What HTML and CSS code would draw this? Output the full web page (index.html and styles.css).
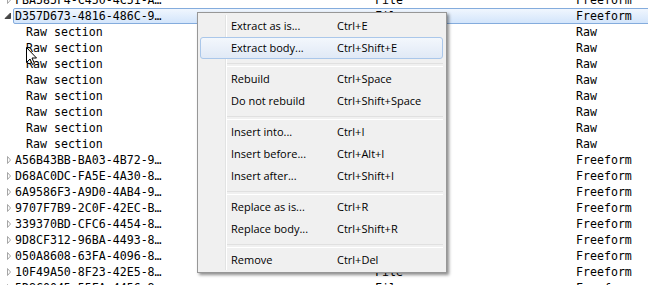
FILE: index.html
```html
<!DOCTYPE html>
<html lang="en">
<head>
  <meta charset="UTF-8" />
  <title>Sections</title>
  <link rel="stylesheet" href="styles.css">
</head>
<body>
  <!-- ===== TREE ===== -->
  <div class="tree">
    <div class="row">
      <span class="exp"><svg width="13" height="16"><path d="M7.5 4.5 L10.5 8 L7.5 11.5 Z" class="tri-closed"/></svg></span>
      <div class="cells"><span class="name">FBA585F4-C450-4C51-A…</span><span>File</span><span>Freeform</span></div>
    </div>
    <div class="row selected">
      <span class="exp"><svg width="13" height="16"><path d="M10.5 5 L10.5 10.5 L5 10.5 Z" class="tri-open"/></svg></span>
      <div class="cells"><span class="name">D357D673-4816-486C-9…</span><span>File</span><span>Freeform</span></div>
    </div>
    <div class="row child"><span class="exp"></span><div class="cells"><span class="name">Raw section</span><span></span><span>Raw</span></div></div>
    <div class="row child"><span class="exp"></span><div class="cells"><span class="name">Raw section</span><span></span><span>Raw</span></div></div>
    <div class="row child"><span class="exp"></span><div class="cells"><span class="name">Raw section</span><span></span><span>Raw</span></div></div>
    <div class="row child"><span class="exp"></span><div class="cells"><span class="name">Raw section</span><span></span><span>Raw</span></div></div>
    <div class="row child"><span class="exp"></span><div class="cells"><span class="name">Raw section</span><span></span><span>Raw</span></div></div>
    <div class="row child"><span class="exp"></span><div class="cells"><span class="name">Raw section</span><span></span><span>Raw</span></div></div>
    <div class="row child"><span class="exp"></span><div class="cells"><span class="name">Raw section</span><span></span><span>Raw</span></div></div>
    <div class="row child"><span class="exp"></span><div class="cells"><span class="name">Raw section</span><span></span><span>Raw</span></div></div>
    <div class="row">
      <span class="exp"><svg width="13" height="16"><path d="M7.5 4.5 L10.5 8 L7.5 11.5 Z" class="tri-closed"/></svg></span>
      <div class="cells"><span class="name">A56B43BB-BA03-4B72-9…</span><span>File</span><span>Freeform</span></div>
    </div>
    <div class="row">
      <span class="exp"><svg width="13" height="16"><path d="M7.5 4.5 L10.5 8 L7.5 11.5 Z" class="tri-closed"/></svg></span>
      <div class="cells"><span class="name">D68AC0DC-FA5E-4A30-8…</span><span>File</span><span>Freeform</span></div>
    </div>
    <div class="row">
      <span class="exp"><svg width="13" height="16"><path d="M7.5 4.5 L10.5 8 L7.5 11.5 Z" class="tri-closed"/></svg></span>
      <div class="cells"><span class="name">6A9586F3-A9D0-4AB4-9…</span><span>File</span><span>Freeform</span></div>
    </div>
    <div class="row">
      <span class="exp"><svg width="13" height="16"><path d="M7.5 4.5 L10.5 8 L7.5 11.5 Z" class="tri-closed"/></svg></span>
      <div class="cells"><span class="name">9707F7B9-2C0F-42EC-B…</span><span>File</span><span>Freeform</span></div>
    </div>
    <div class="row">
      <span class="exp"><svg width="13" height="16"><path d="M7.5 4.5 L10.5 8 L7.5 11.5 Z" class="tri-closed"/></svg></span>
      <div class="cells"><span class="name">339370BD-CFC6-4454-8…</span><span>File</span><span>Freeform</span></div>
    </div>
    <div class="row">
      <span class="exp"><svg width="13" height="16"><path d="M7.5 4.5 L10.5 8 L7.5 11.5 Z" class="tri-closed"/></svg></span>
      <div class="cells"><span class="name">9D8CF312-96BA-4493-8…</span><span>File</span><span>Freeform</span></div>
    </div>
    <div class="row">
      <span class="exp"><svg width="13" height="16"><path d="M7.5 4.5 L10.5 8 L7.5 11.5 Z" class="tri-closed"/></svg></span>
      <div class="cells"><span class="name">050A8608-63FA-4096-8…</span><span>File</span><span>Freeform</span></div>
    </div>
    <div class="row">
      <span class="exp"><svg width="13" height="16"><path d="M7.5 4.5 L10.5 8 L7.5 11.5 Z" class="tri-closed"/></svg></span>
      <div class="cells"><span class="name">10F49A50-8F23-42E5-8…</span><span>File</span><span>Freeform</span></div>
    </div>
    <div class="row">
      <span class="exp"><svg width="13" height="16"><path d="M7.5 4.5 L10.5 8 L7.5 11.5 Z" class="tri-closed"/></svg></span>
      <div class="cells"><span class="name">5D8C0045-55FA-4456-8…</span><span>File</span><span>Freeform</span></div>
    </div>
  </div>

  <!-- ===== CONTEXT MENU ===== -->
  <div class="menu">
    <div class="item"><span>Extract as is...</span><span>Ctrl+E</span></div>
    <div class="item hot"><span>Extract body...</span><span>Ctrl+Shift+E</span></div>
    <div class="sep"></div>
    <div class="item"><span>Rebuild</span><span>Ctrl+Space</span></div>
    <div class="item"><span>Do not rebuild</span><span>Ctrl+Shift+Space</span></div>
    <div class="sep"></div>
    <div class="item"><span>Insert into...</span><span>Ctrl+I</span></div>
    <div class="item"><span>Insert before...</span><span>Ctrl+Alt+I</span></div>
    <div class="item"><span>Insert after...</span><span>Ctrl+Shift+I</span></div>
    <div class="sep"></div>
    <div class="item"><span>Replace as is...</span><span>Ctrl+R</span></div>
    <div class="item"><span>Replace body...</span><span>Ctrl+Shift+R</span></div>
    <div class="sep"></div>
    <div class="item"><span>Remove</span><span>Ctrl+Del</span></div>
  </div>

  <!-- mouse pointer -->
  <svg class="cursor" width="13" height="20" viewBox="0 0 13 20">
    <path d="M0.5 0.5 L0.5 15.5 L4 12 L6.5 17.5 L8.5 16.5 L6 11 L10.5 11 Z" fill="#fff" stroke="#000" stroke-width="1" stroke-linejoin="miter"/>
  </svg>
</body>
</html>
```

FILE: styles.css
```css
* { box-sizing: border-box; margin: 0; padding: 0; }

body {
  width: 648px;
  height: 285px;
  overflow: hidden;
  position: relative;
  background: #ffffff;
  color: #000000;
}

/* ===== TREE ===== */
.tree {
  margin-top: -8px;
  font-family: "DejaVu Sans Mono", "Liberation Mono", monospace;
  font-size: 11.6px;
}
.row {
  display: flex;
  height: 16px;
}
.exp { width: 13px; flex: none; height: 16px; }
.exp svg { display: block; }
.tri-closed { fill: #ffffff; stroke: #a6a6a6; stroke-width: 1; }
.tri-open { fill: #464646; stroke: #464646; stroke-width: 1; stroke-linejoin: round; }

.cells {
  flex: 1;
  display: grid;
  grid-template-columns: 360px 201px 1fr;
  padding-left: 1px;
  border: 1px solid transparent;
  line-height: 14px;
  white-space: nowrap;
  margin-right: -4px;
}
.child .name { padding-left: 11px; }

.row.selected .cells {
  border-color: #84acdd;
  border-radius: 2px;
  background: linear-gradient(#f0f6fe, #d3e5fb);
}

/* ===== MENU ===== */
.menu {
  position: absolute;
  left: 197px;
  top: 12px;
  width: 250px;
  border: 1px solid #979797;
  background: #f0f0f0;
  padding: 2px 3px 1px 2px;
  box-shadow: 2px 2px 3px rgba(0, 0, 0, 0.45);
  font-family: "Open Sans", "Liberation Sans", sans-serif;
  font-size: 11px;
}
.menu::before {
  content: "";
  position: absolute;
  left: 27px;
  top: 2px;
  bottom: 2px;
  width: 1px;
  background: #e2e3e3;
  box-shadow: 1px 0 0 #ffffff;
}
.item {
  position: relative;
  display: grid;
  grid-template-columns: 106px 1fr;
  height: 22px;
  line-height: 20px;
  padding-left: 30px;
  border: 1px solid transparent;
  border-radius: 3px;
}
.item.hot {
  border-color: #aac7ea;
  background: linear-gradient(#f3f7fc, #e0e9f6);
}
.sep {
  position: relative;
  height: 9px;
  margin-left: 27px;
}
.sep::after {
  content: "";
  position: absolute;
  left: 0;
  right: 0;
  top: 4px;
  height: 2px;
  border-top: 1px solid #e0e0e0;
  border-bottom: 1px solid #ffffff;
}

/* ===== POINTER ===== */
.cursor {
  position: absolute;
  left: 26px;
  top: 47px;
}
```
